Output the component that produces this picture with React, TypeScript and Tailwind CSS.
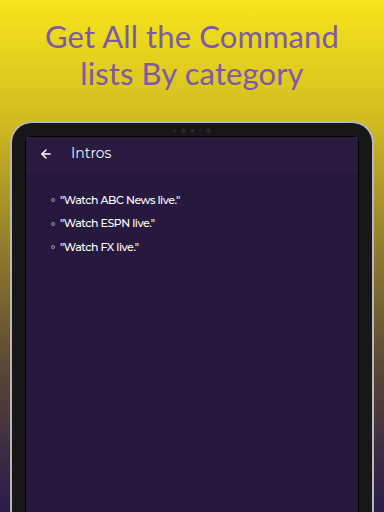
import { ArrowLeft } from 'lucide-react';

const items = ['"Watch ABC News live."', '"Watch ESPN live."', '"Watch FX live."'];

const App = () => {
  return (
    <div className="relative w-[384px] h-[512px] overflow-hidden bg-[linear-gradient(to_bottom,#f7e41a_0%,#d4bf20_22%,#8c792c_50%,#594636_72%,#3d2c42_88%,#2a1b4a_100%)]">
      <h1 className="pt-[18px] text-center text-[31px] leading-[37px] text-[#7d5aa8] font-['Lato',sans-serif] tracking-[0.1px]">
        Get All the Command
        <br />
        lists By category
      </h1>

      {/* tablet */}
      <div className="mt-[29px] mx-[10px] h-[400px] rounded-t-[22px] border-2 border-b-0 border-[#b8b8b8] bg-[#171717] px-[13px] pt-[13px]">
        <div className="relative h-[8px] -mt-[10px] mb-[2px] flex justify-center items-center gap-[5px]">
          <span className="w-[3px] h-[3px] rounded-full bg-[#2c2c2c]" />
          <span className="w-[5px] h-[5px] rounded-full bg-[#262626]" />
          <span className="w-[3px] h-[3px] rounded-full bg-[#1e3a5f]" />
          <span className="w-[2px] h-[2px] rounded-full bg-[#2a2a2a]" />
          <span className="w-[5px] h-[5px] rounded-full bg-[#262626]" />
        </div>
        <div className="h-full rounded-t-[6px] border border-b-0 border-black bg-[#27183d] font-['Montserrat','Inter',sans-serif]">
          <div className="h-[34px] flex items-center pl-[13px] border-b border-[#2c1c42] bg-[#2a1a40]">
            <ArrowLeft size={14} strokeWidth={2.5} className="text-white" />
            <span className="ml-[18px] text-[14px] text-[#f2f2f2]">Intros</span>
          </div>
          <ul className="pt-[21px] pl-[25px] flex flex-col gap-[7.5px]">
            {items.map((t) => (
              <li key={t} className="flex items-center h-[16px] text-[11px] font-medium text-white tracking-[-0.45px]">
                <span className="w-[4px] h-[4px] rounded-full border border-[#9c92ae] mr-[5px]" />
                {t}
              </li>
            ))}
          </ul>
        </div>
      </div>
    </div>
  );
};

export default App;
